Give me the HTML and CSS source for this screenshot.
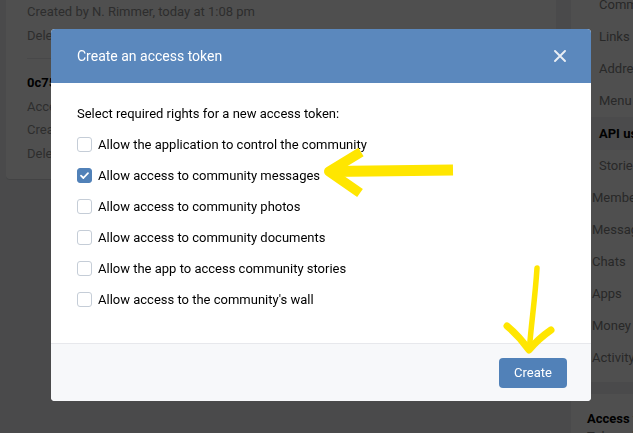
FILE: index.html
```html
<!DOCTYPE html>
<html lang="en">
<head>
<meta charset="utf-8">
<title>Create an access token</title>
<link rel="stylesheet" href="styles.css">
</head>
<body>
<div class="page">
  <main class="card">
    <section class="token first">
      <div class="meta">Created by N. Rimmer, today at 1:08 pm</div>
      <div class="meta">Delete</div>
    </section>
    <section class="token">
      <div class="key">0c75a1e9f3b2d84c6e07a5b19d2f4c8e3a6b0d7f1e5c9a2b4d8f6e0c3a7b5d91e</div>
      <div class="meta">Access rights: community management, messages</div>
      <div class="meta">Created by N. Rimmer, today at 1:02 pm</div>
      <div class="meta">Delete</div>
    </section>
  </main>
  <aside class="side">
    <nav class="menu">
      <div class="item sub">Comments</div>
      <div class="item sub">Links</div>
      <div class="item sub">Addresses</div>
      <div class="item sub">Menu</div>
      <div class="item sub active">API usage</div>
      <div class="item sub">Stories</div>
      <div class="item">Members</div>
      <div class="item">Messages</div>
      <div class="item">Chats</div>
      <div class="item">Apps</div>
      <div class="item">Money transfers</div>
      <div class="item">Activity</div>
    </nav>
    <div class="info">
      <div class="info-title">Access tokens</div>
      <div class="info-text">Tokens let apps work with the community</div>
    </div>
  </aside>
</div>

<div class="overlay"></div>

<div class="modal">
  <div class="modal-head">
    <div class="modal-title">Create an access token</div>
    <svg class="close" width="12" height="12" viewBox="0 0 12 12"><path d="M1 1L11 11M11 1L1 11" stroke="#e9eef5" stroke-width="1.9" stroke-linecap="round"/></svg>
  </div>
  <div class="modal-body">
    <div class="intro">Select required rights for a new access token:</div>
    <label class="row"><span class="box"></span>Allow the application to control the community</label>
    <label class="row"><span class="box on"><svg width="15" height="15" viewBox="0 0 15 15"><path d="M4 7.6L6.4 10L11 5.2" fill="none" stroke="#fff" stroke-width="1.8" stroke-linecap="round" stroke-linejoin="round"/></svg></span>Allow access to community messages</label>
    <label class="row"><span class="box"></span>Allow access to community photos</label>
    <label class="row"><span class="box"></span>Allow access to community documents</label>
    <label class="row"><span class="box"></span>Allow the app to access community stories</label>
    <label class="row"><span class="box"></span>Allow access to the community's wall</label>
  </div>
  <div class="modal-foot">
    <button class="btn">Create</button>
  </div>
</div>

<svg class="marks" width="633" height="433" viewBox="0 0 633 433">
  <path d="M453 170 L330 171.5" fill="none" stroke="#ffe600" stroke-width="11"/>
  <path d="M361 152 L329 171.5 L360 193" fill="none" stroke="#ffe600" stroke-width="10" stroke-linejoin="round"/>
  <path d="M537 268 C535 300 531 325 529.5 348" fill="none" stroke="#ffe600" stroke-width="5.5" stroke-linecap="round"/>
  <path d="M507 326 Q519 336 529 350 Q538 339 551 330" fill="none" stroke="#ffe600" stroke-width="7" stroke-linecap="round" stroke-linejoin="round"/>
</svg>
</body>
</html>
```

FILE: styles.css
```css
html, body {
  margin: 0;
  padding: 0;
  overflow: hidden;
  width: 633px;
  height: 433px;
}
body {
  background: #edeef0;
  font-family: Roboto, "Liberation Sans", Arial, sans-serif;
  font-size: 13px;
  color: #000;
}
.page {
  display: flex;
  align-items: flex-start;
  gap: 15px;
  padding-left: 6px;
}
.card {
  width: 550px;
  flex-shrink: 0;
  background: #fff;
  border-radius: 0 0 4px 4px;
  box-shadow: 0 1px 0 #d7d8db;
}
.token {
  padding: 12px 21px 14px;
  line-height: 23.5px;
}
.token.first {
  padding-top: 0;
  padding-bottom: 11px;
  border-bottom: 1px solid #e7e8ec;
  margin: 0 0 0 21px;
  padding-left: 0;
}
.meta { color: #939393; white-space: nowrap; }
.key { font-weight: 700; white-space: nowrap; overflow: hidden; }
.side {
  width: 230px;
  flex-shrink: 0;
  display: flex;
  flex-direction: column;
  gap: 12px;
  margin-top: -11px;
}
.menu {
  background: #fff;
  border-radius: 0 0 4px 4px;
  padding-bottom: 8px;
}
.item {
  height: 32px;
  line-height: 32px;
  padding-left: 21px;
  color: #828282;
  white-space: nowrap;
}
.item.sub { padding-left: 28px; }
.item.active {
  background: #f0f2f5;
  color: #000;
  font-weight: 700;
  height: 33px;
  line-height: 33px;
}
.info {
  background: #fff;
  border-radius: 4px;
  padding: 16px 16px;
  line-height: 18px;
}
.info-title { font-weight: 700; }
.info-text { color: #828282; }

.overlay {
  position: fixed;
  inset: 0;
  background: rgba(0, 0, 0, 0.69);
}
.modal {
  position: absolute;
  left: 51px;
  top: 29px;
  width: 540px;
  background: #fff;
  border-radius: 4px;
  overflow: hidden;
}
.modal-head {
  height: 54px;
  background: #5b88bd;
  display: flex;
  align-items: center;
  justify-content: space-between;
  padding: 0 25px 0 26px;
}
.modal-title {
  color: #fff;
  font-size: 14px;
}
.close { display: block; }
.modal-body {
  padding: 22px 26px 28px;
}
.intro {
  line-height: 17px;
  margin-bottom: 7px;
}
.row {
  display: flex;
  align-items: center;
  height: 31px;
  white-space: nowrap;
}
.box {
  width: 15px;
  height: 15px;
  box-sizing: border-box;
  border: 1px solid #c5cdd7;
  border-radius: 3px;
  margin-right: 6px;
  flex-shrink: 0;
  position: relative;
}
.box.on {
  background: #5181b8;
  border-color: #5181b8;
}
.box.on svg {
  position: absolute;
  left: -1px;
  top: -1px;
}
.modal-foot {
  height: 57px;
  background: #f7f8fa;
  border-top: 1px solid #e7e8ec;
  display: flex;
  align-items: center;
  justify-content: flex-end;
  padding-right: 24px;
}
.btn {
  height: 30px;
  width: 68px;
  border: 0;
  border-radius: 4px;
  background: #5181b8;
  color: #fff;
  font-family: inherit;
  font-size: 13px;
  padding: 0;
}
.marks {
  position: absolute;
  left: 0;
  top: 0;
  pointer-events: none;
}
```
